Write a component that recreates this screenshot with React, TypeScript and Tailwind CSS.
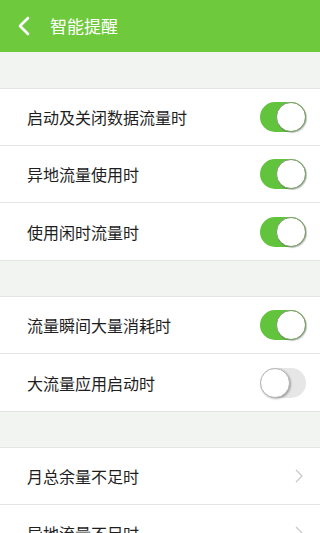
import React from "react";

const font = { fontFamily: '"Noto Sans CJK SC", "Noto Sans", sans-serif' };

function Toggle({ on }: { on: boolean }) {
  return on ? (
    <div className="relative w-[46px] h-[30px] rounded-full bg-[#62c33d]">
      <div className="absolute right-0 top-0 w-[30px] h-[30px] rounded-full bg-white border border-[#7d9a6e] shadow-[1px_1px_1px_rgba(0,0,0,0.25)]" />
    </div>
  ) : (
    <div className="relative w-[46px] h-[30px] rounded-full bg-[#e6e6e6]">
      <div className="absolute left-0 top-0 w-[30px] h-[30px] rounded-full bg-white border border-[#b5b5b5] shadow-[1px_1px_2px_rgba(0,0,0,0.3)]" />
    </div>
  );
}

function Row({ label, toggle, last }: { label: string; toggle?: boolean; last?: boolean }) {
  return (
    <div className={`flex items-center justify-between h-[57px] pl-[27px] pr-[14px] bg-white ${last ? "" : "border-b border-[#e3e5e2]"}`}>
      <span className="text-[16px] text-[#1e1e1e]">{label}</span>
      {toggle === undefined ? (
        <svg width="10" height="16" viewBox="0 0 10 16" className="mr-[2px]">
          <path d="M2 2 L8 8 L2 14" fill="none" stroke="#c9c9c9" strokeWidth="1.3" />
        </svg>
      ) : (
        <Toggle on={toggle} />
      )}
    </div>
  );
}

function Section({ children }: { children: React.ReactNode }) {
  return <div className="border-y border-[#e3e5e2] bg-white">{children}</div>;
}

export default function App() {
  return (
    <div className="w-[320px] h-[533px] overflow-hidden bg-[#f2f4f1]" style={font}>
      <div className="h-[52px] bg-[#6fc93c] flex items-center">
        <svg width="14" height="22" viewBox="0 0 14 22" className="ml-[17px]">
          <path d="M11 3 L3 11 L11 19" fill="none" stroke="white" strokeWidth="2.6" strokeLinecap="round" strokeLinejoin="round" />
        </svg>
        <span className="ml-[19px] text-[17px] text-white">智能提醒</span>
      </div>
      <div className="h-[36px]" />
      <Section>
        <Row label="启动及关闭数据流量时" toggle={true} />
        <Row label="异地流量使用时" toggle={true} />
        <Row label="使用闲时流量时" toggle={true} last />
      </Section>
      <div className="h-[35px]" />
      <Section>
        <Row label="流量瞬间大量消耗时" toggle={true} />
        <Row label="大流量应用启动时" toggle={false} last />
      </Section>
      <div className="h-[35px]" />
      <Section>
        <Row label="月总余量不足时" />
        <Row label="异地流量不足时" />
      </Section>
    </div>
  );
}
